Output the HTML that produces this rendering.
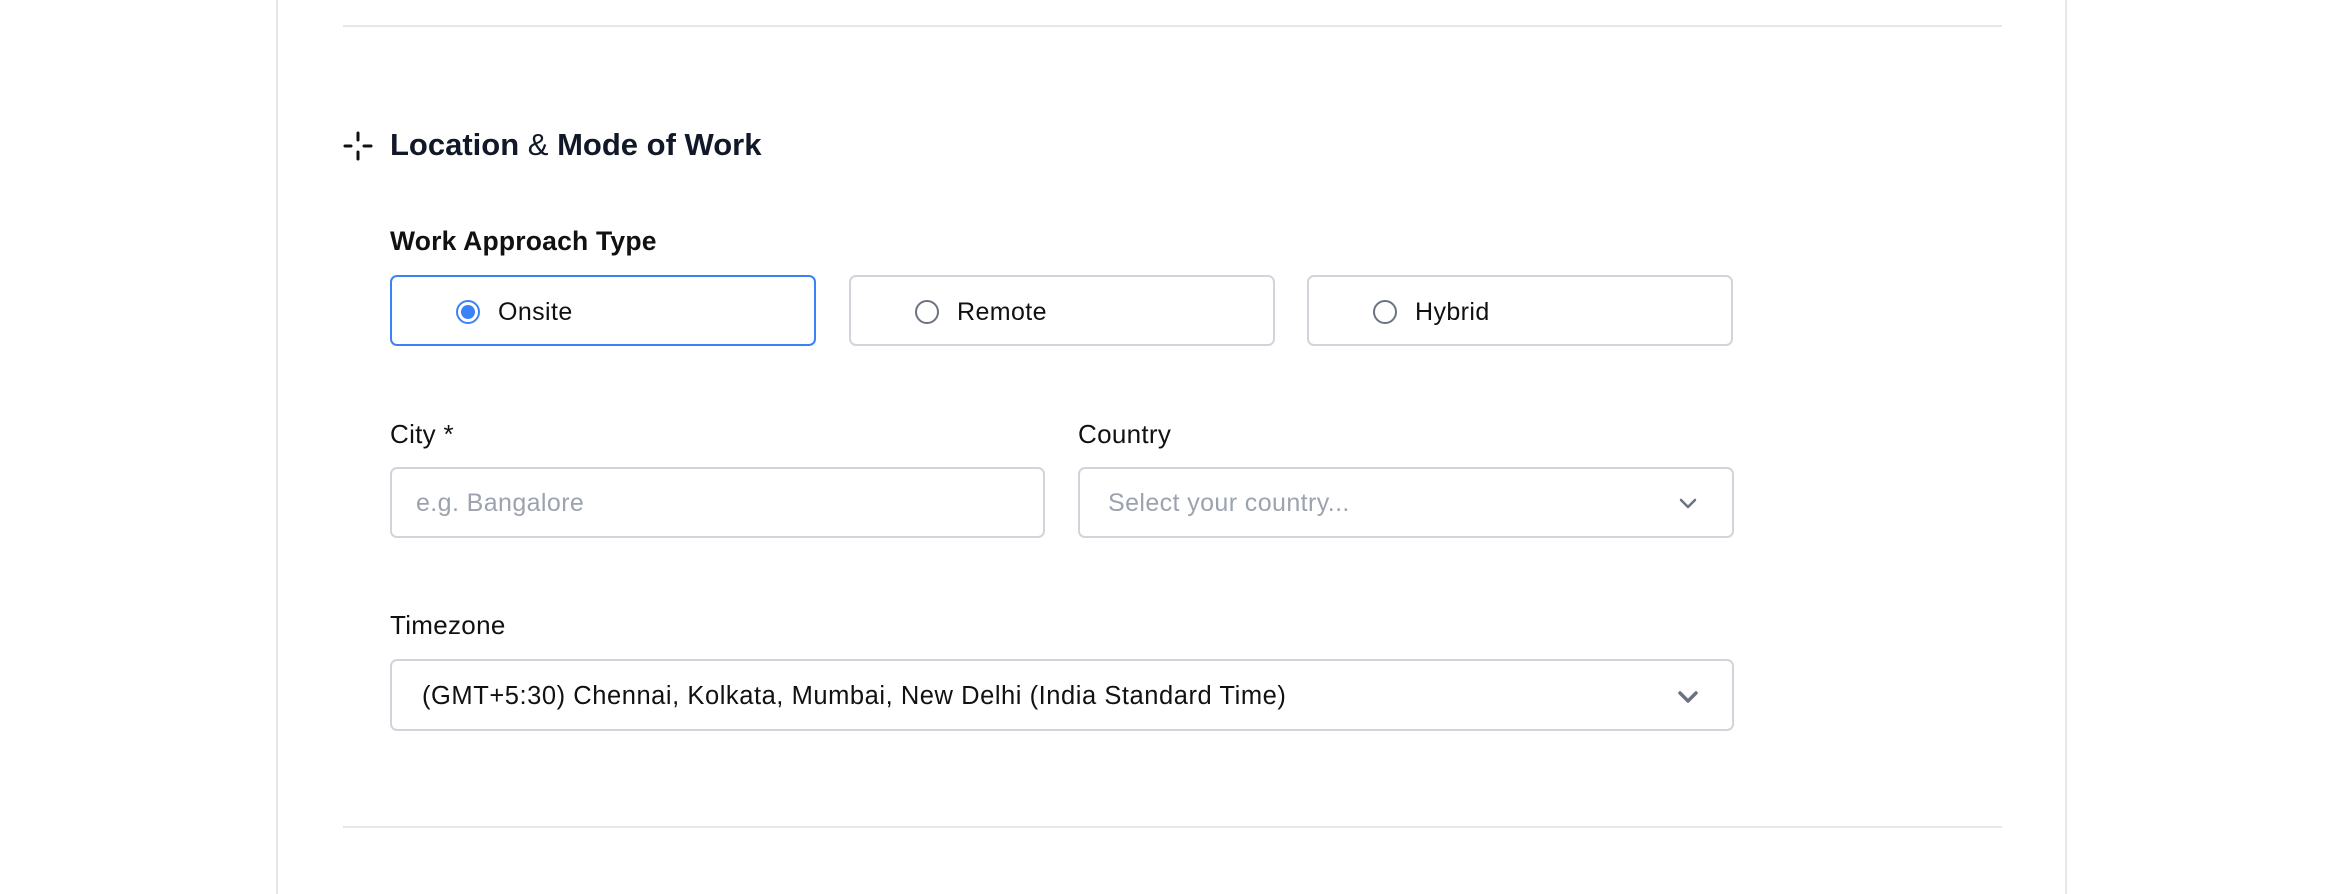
<!DOCTYPE html>
<html><head><meta charset="utf-8"><style>
*{box-sizing:border-box;margin:0;padding:0}
body{width:2346px;height:894px;background:#fff;font-family:"Liberation Sans",sans-serif;position:relative;overflow:hidden;color:#111}
.abs{position:absolute}
.vl{position:absolute;top:0;width:2px;height:894px;background:#e5e7eb}
.hr{position:absolute;left:343px;width:1659px;height:2px;background:#e5e7eb}
.lbl{position:absolute;font-size:26px;color:#111;line-height:30px;letter-spacing:0.3px}
.box{position:absolute;border:2px solid #d1d5db;border-radius:7px;background:#fff}
.rad{position:absolute;top:275px;height:71px;width:426px;border:2px solid #d1d5db;border-radius:7px}
.rad .c{position:absolute;left:64px;top:23px;width:24px;height:24px;border:2px solid #6b7280;border-radius:50%}
.rad .t{position:absolute;left:106px;top:20px;font-size:25px;line-height:30px;letter-spacing:0.4px}
.ph{position:absolute;font-size:25px;color:#9ca3af;line-height:30px;letter-spacing:0.4px}
</style></head><body>
<div class="vl" style="left:276px"></div>
<div class="vl" style="left:2065px"></div>
<div class="hr" style="top:25px"></div>
<div class="hr" style="top:826px"></div>
<svg class="abs" style="left:340px;top:128px" width="36" height="36" viewBox="0 0 36 36"><g stroke="#111" stroke-width="3" stroke-linecap="round"><line x1="5" y1="18" x2="11" y2="18"/><line x1="24" y1="18" x2="31" y2="18"/><line x1="18" y1="5" x2="18" y2="12"/><line x1="18" y1="24" x2="18" y2="31"/></g></svg>
<div class="abs" style="left:390px;top:127px;font-size:31px;font-weight:bold;color:#111827;line-height:36px">Location <span style="font-weight:normal">&amp;</span> Mode of Work</div>
<div class="lbl" style="left:390px;top:226px;font-weight:bold;font-size:26.5px;letter-spacing:0.2px">Work Approach Type</div>
<div class="rad" style="left:390px;border-color:#3b82f6"><div class="c" style="border-color:#3b82f6"><div style="position:absolute;left:3px;top:3px;width:14px;height:14px;border-radius:50%;background:#3b82f6"></div></div><div class="t">Onsite</div></div>
<div class="rad" style="left:849px"><div class="c"></div><div class="t">Remote</div></div>
<div class="rad" style="left:1307px"><div class="c"></div><div class="t">Hybrid</div></div>
<div class="lbl" style="left:390px;top:419px">City *</div>
<div class="lbl" style="left:1078px;top:419px">Country</div>
<div class="box" style="left:390px;top:467px;width:655px;height:71px"></div>
<div class="ph" style="left:416px;top:488px">e.g. Bangalore</div>
<div class="box" style="left:1078px;top:467px;width:656px;height:71px"></div>
<div class="ph" style="left:1108px;top:488px">Select your country...</div>
<svg class="abs" style="left:1677px;top:495px" width="22" height="16" viewBox="0 0 22 16"><path d="M4 5l7 7 7-7" fill="none" stroke="#6b7280" stroke-width="2.5" stroke-linecap="round" stroke-linejoin="round"/></svg>
<div class="lbl" style="left:390px;top:610px">Timezone</div>
<div class="box" style="left:390px;top:659px;width:1344px;height:72px"></div>
<div class="abs" style="left:422px;top:681px;font-size:25.5px;line-height:30px;color:#111;letter-spacing:0.55px">(GMT+5:30) Chennai, Kolkata, Mumbai, New Delhi (India Standard Time)</div>
<svg class="abs" style="left:1676px;top:688px" width="24" height="18" viewBox="0 0 24 18"><path d="M4 5l8 8 8-8" fill="none" stroke="#6b7280" stroke-width="3.5" stroke-linecap="round" stroke-linejoin="round"/></svg>
</body></html>
